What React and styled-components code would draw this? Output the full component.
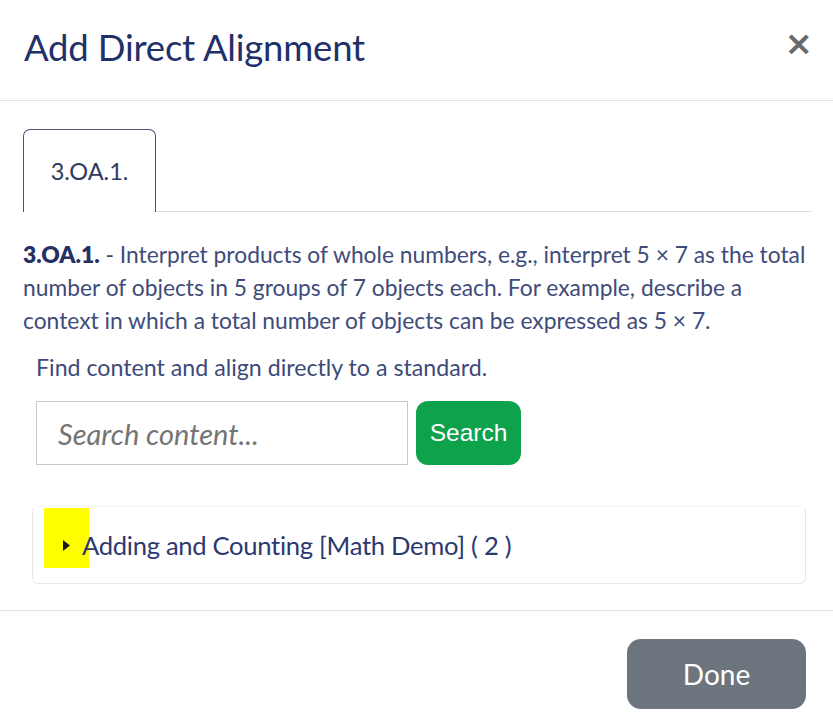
import React from "react";
import styled, { createGlobalStyle } from "styled-components";

const Global = createGlobalStyle`
  html, body {
    margin: 0;
    padding: 0;
    background: #fff;
  }
  body {
    font-family: Lato, "Open Sans", "Liberation Sans", sans-serif;
  }
`;

const Modal = styled.div`
  width: 833px;
  height: 728px;
  background: #fff;
  display: flex;
  flex-direction: column;
`;

const Header = styled.div`
  height: 101px;
  box-sizing: border-box;
  padding: 0 20px 6px 24px;
  display: flex;
  align-items: center;
  justify-content: space-between;
  border-bottom: 1px solid #e3e3e3;
`;

const Title = styled.h1`
  margin: 0;
  font-size: 36.5px;
  font-weight: 400;
  color: #22306a;
  letter-spacing: -0.2px;
`;

const Close = styled.button`
  border: 0;
  background: none;
  padding: 0;
  font-size: 34px;
  font-weight: 700;
  color: #6a6a6a;
  line-height: 1;
  cursor: pointer;
  font-family: "DejaVu Sans", sans-serif;
  margin-top: -8px;
`;

const Body = styled.div`
  padding: 28px 21px 0 23px;
  height: 510px;
  box-sizing: border-box;
  border-bottom: 1px solid #e3e3e3;
`;

const Tabs = styled.div`
  display: flex;
  border-bottom: 1px solid #dedede;
`;

const Tab = styled.div`
  width: 133px;
  height: 83px;
  box-sizing: border-box;
  border: 1px solid #4a5375;
  border-bottom: 0;
  border-radius: 7px 7px 0 0;
  margin-bottom: -1px;
  background: #fff;
  display: flex;
  align-items: center;
  justify-content: center;
  font-size: 23.5px;
  color: #2f3a5e;
`;

const Description = styled.p`
  margin: 26px 0 0;
  font-size: 22.8px;
  line-height: 33px;
  color: #404b7a;

  strong {
    color: #253064;
    font-weight: 800;
  }
`;

const Hint = styled.p`
  margin: 16px 0 0 13px;
  font-size: 23.2px;
  color: #3e4a78;
`;

const SearchRow = styled.div`
  display: flex;
  gap: 8px;
  margin: 20px 0 0 13px;
`;

const SearchInput = styled.input`
  width: 372px;
  height: 64px;
  box-sizing: border-box;
  border: 1px solid #c9c9c9;
  padding: 0 21px;
  font-size: 29px;
  font-family: Lato, "Liberation Sans", sans-serif;
  outline: none;

  &::placeholder {
    color: #747474;
    font-style: italic;
  }
`;

const SearchButton = styled.button`
  width: 105px;
  height: 64px;
  border: 0;
  border-radius: 12px;
  background: #0ea24b;
  color: #fff;
  font-size: 24.5px;
  font-family: "Liberation Sans", Arial, sans-serif;
  padding: 0;
`;

const Card = styled.div`
  margin: 41px 6px 0 9px;
  height: 78px;
  box-sizing: border-box;
  border: 1px solid #e8e8e8;
  border-top-color: #f4f4f4;
  border-radius: 6px;
  padding: 1px 0 0 11px;
  display: flex;
  align-items: flex-start;
`;

const Highlight = styled.span`
  display: flex;
  align-items: flex-start;
  justify-content: flex-end;
  width: 45px;
  height: 60px;
  background: #ffff00;
  padding: 32px 19px 0 0;
  box-sizing: border-box;
`;

const GroupTitle = styled.span`
  margin-left: -7px;
  height: 74px;
  display: flex;
  align-items: center;
  font-size: 25.6px;
  color: #2c3870;
  letter-spacing: -0.3px;
`;

const Footer = styled.div`
  flex: 1;
  display: flex;
  justify-content: flex-end;
  align-items: flex-start;
  padding: 28px 27px 0 0;
`;

const DoneButton = styled.button`
  width: 179px;
  height: 70px;
  border: 0;
  border-radius: 14px;
  background: #6c757e;
  color: #fff;
  font-size: 28px;
  font-family: Lato, "Liberation Sans", sans-serif;
`;

const Caret = () => (
  <svg width="7" height="11" viewBox="0 0 7 11">
    <path d="M0 0 L7 5.5 L0 11 Z" fill="#1a1a1a" />
  </svg>
);

export default function App() {
  return (
    <Modal>
      <Global />
      <Header>
        <Title>Add Direct Alignment</Title>
        <Close aria-label="Close">×</Close>
      </Header>
      <Body>
        <Tabs>
          <Tab>3.OA.1.</Tab>
        </Tabs>
        <Description>
          <strong>3.OA.1.</strong> - Interpret products of whole numbers, e.g., interpret 5 × 7 as the total
          number of objects in 5 groups of 7 objects each. For example, describe a
          context in which a total number of objects can be expressed as 5 × 7.
        </Description>
        <Hint>Find content and align directly to a standard.</Hint>
        <SearchRow>
          <SearchInput placeholder="Search content..." />
          <SearchButton>Search</SearchButton>
        </SearchRow>
        <Card>
          <Highlight>
            <Caret />
          </Highlight>
          <GroupTitle>Adding and Counting [Math Demo] ( 2 )</GroupTitle>
        </Card>
      </Body>
      <Footer>
        <DoneButton>Done</DoneButton>
      </Footer>
    </Modal>
  );
}
